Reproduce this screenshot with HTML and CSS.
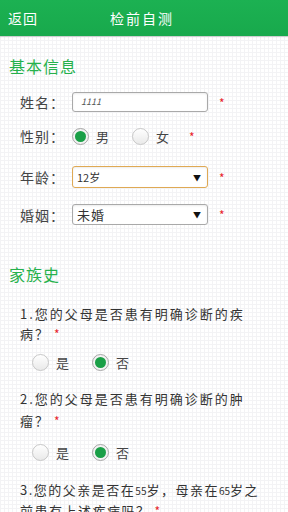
FILE: index.html
```html
<!DOCTYPE html>
<html lang="zh">
<head>
    <meta charset="UTF-8">
    <meta name="viewport" content="width=device-width, initial-scale=1.0">
    <title>检前自测</title>
    <link rel="stylesheet" href="styles.css">
</head>
<body>
    <header class="topbar">
        <span class="back">返回</span>
        <span class="title">检前自测</span>
        <span></span>
    </header>

    <h2 class="section-title first">基本信息</h2>

    <div class="row row-name">
        <span class="label">姓名：</span>
        <div class="input">1111</div>
        <span class="star">*</span>
    </div>
    <div class="row row-sex">
        <span class="label">性别：</span>
        <span class="radio checked"></span><span class="opt">男</span>
        <span class="radio gap"></span><span class="opt">女</span>
        <span class="star star-sex">*</span>
    </div>
    <div class="row row-age">
        <span class="label">年龄：</span>
        <div class="select focus"><span class="small">12岁</span><span class="arrow">▼</span></div>
        <span class="star">*</span>
    </div>
    <div class="row row-marry">
        <span class="label">婚姻：</span>
        <div class="select"><span>未婚</span><span class="arrow">▼</span></div>
        <span class="star">*</span>
    </div>

    <h2 class="section-title second">家族史</h2>

    <p class="question q1">1.您的父母是否患有明确诊断的疾<br>病？<span class="star">*</span></p>
    <div class="answers">
        <span class="radio"></span><span class="opt">是</span>
        <span class="radio checked gap"></span><span class="opt">否</span>
    </div>

    <p class="question q2">2.您的父母是否患有明确诊断的肿<br>瘤？<span class="star">*</span></p>
    <div class="answers a2">
        <span class="radio"></span><span class="opt">是</span>
        <span class="radio checked gap"></span><span class="opt">否</span>
    </div>

    <p class="question q3">3.您的父亲是否在<span class="num">55</span>岁，母亲在<span class="num">65</span>岁之<br>前患有上述疾病吗？<span class="star">*</span></p>
</body>
</html>
```

FILE: styles.css
```css
body {
    margin: 0;
    font-family: "Noto Sans CJK SC", "Noto Sans", sans-serif;
    color: #333;
    background-color: #fff;
    background-image:
        linear-gradient(to right, #f3f3f5 1px, transparent 1px),
        linear-gradient(to bottom, #f3f3f5 1px, transparent 1px);
    background-size: 4px 4px;
    overflow: hidden;
}

.topbar {
    display: grid;
    grid-template-columns: 1fr auto 1fr;
    align-items: center;
    height: 36px;
    padding: 0 8px;
    background: linear-gradient(to bottom, #1cb152, #18a94c);
    box-shadow: 0 1px 1px rgba(0, 0, 0, 0.15);
    color: #fff;
    font-size: 14px;
    letter-spacing: 1px;
}

.title {
    letter-spacing: 2px;
    margin-right: 4px;
}

.section-title {
    margin: 0;
    padding-left: 9px;
    font-size: 16px;
    font-weight: normal;
    line-height: 20px;
    color: #26b14c;
    letter-spacing: 1px;
}

.section-title.first {
    margin-top: 20px;
}

.section-title.second {
    margin-top: 39px;
}

.row {
    display: flex;
    align-items: center;
    padding-left: 20px;
    font-size: 14px;
}

.label {
    width: 52px;
    letter-spacing: 1px;
    color: #444;
}

.row-name {
    margin-top: 16px;
    height: 20px;
}

.row-sex {
    margin-top: 14px;
    height: 20px;
}

.row-age {
    margin-top: 20px;
    height: 22px;
}

.row-marry {
    margin-top: 16px;
    height: 21px;
}

.input,
.select {
    box-sizing: border-box;
    width: 136px;
    height: 100%;
    border: 1px solid #a9a9a9;
    border-radius: 3px;
    background: #fff;
    box-shadow: inset 0 1px 2px rgba(0, 0, 0, 0.08);
}

.input {
    padding-left: 8px;
    font-size: 9px;
    font-style: italic;
    line-height: 18px;
    color: #555;
}

.select {
    display: flex;
    align-items: center;
    justify-content: space-between;
    padding: 0 5px 0 4px;
    font-size: 13px;
    letter-spacing: 1px;
}

.select .small {
    font-size: 11px;
    letter-spacing: 0;
}

.select.focus {
    border-color: #dfa954;
}

.arrow {
    font-size: 8px;
    color: #111;
}

.star {
    color: #e8232a;
    font-size: 12px;
    margin-left: 11px;
}

.star-sex {
    margin-left: 20px;
}

.radio {
    box-sizing: border-box;
    width: 17px;
    height: 17px;
    border-radius: 50%;
    border: 1px solid #c8c8c8;
    background: linear-gradient(to bottom, #fff, #e9e9e9);
    display: inline-flex;
    align-items: center;
    justify-content: center;
}

.radio.checked {
    border-color: #a7a7a7;
    background: #f2f2f2;
}

.radio.checked::after {
    content: "";
    width: 11px;
    height: 11px;
    border-radius: 50%;
    background: #1a9f47;
}

.radio.gap {
    margin-left: 23px;
}

.opt {
    margin-left: 7px;
    font-size: 13px;
    color: #444;
}

.question {
    margin: 16px 0 0;
    padding-left: 20px;
    font-size: 13px;
    line-height: 20px;
    letter-spacing: 2px;
    color: #333;
}

.question .star {
    margin-left: 4px;
}

.question .num {
    font-size: 10px;
    letter-spacing: 0;
}

.question.q1 {
    margin-top: 20px;
}

.question.q2 {
    line-height: 22px;
}

.question.q3 {
    margin-top: 18px;
    letter-spacing: 1.5px;
}

.answers {
    display: flex;
    align-items: center;
    height: 20px;
    margin-top: 8px;
    padding-left: 32px;
}

.answers.a2 {
    margin-top: 10px;
}
```
